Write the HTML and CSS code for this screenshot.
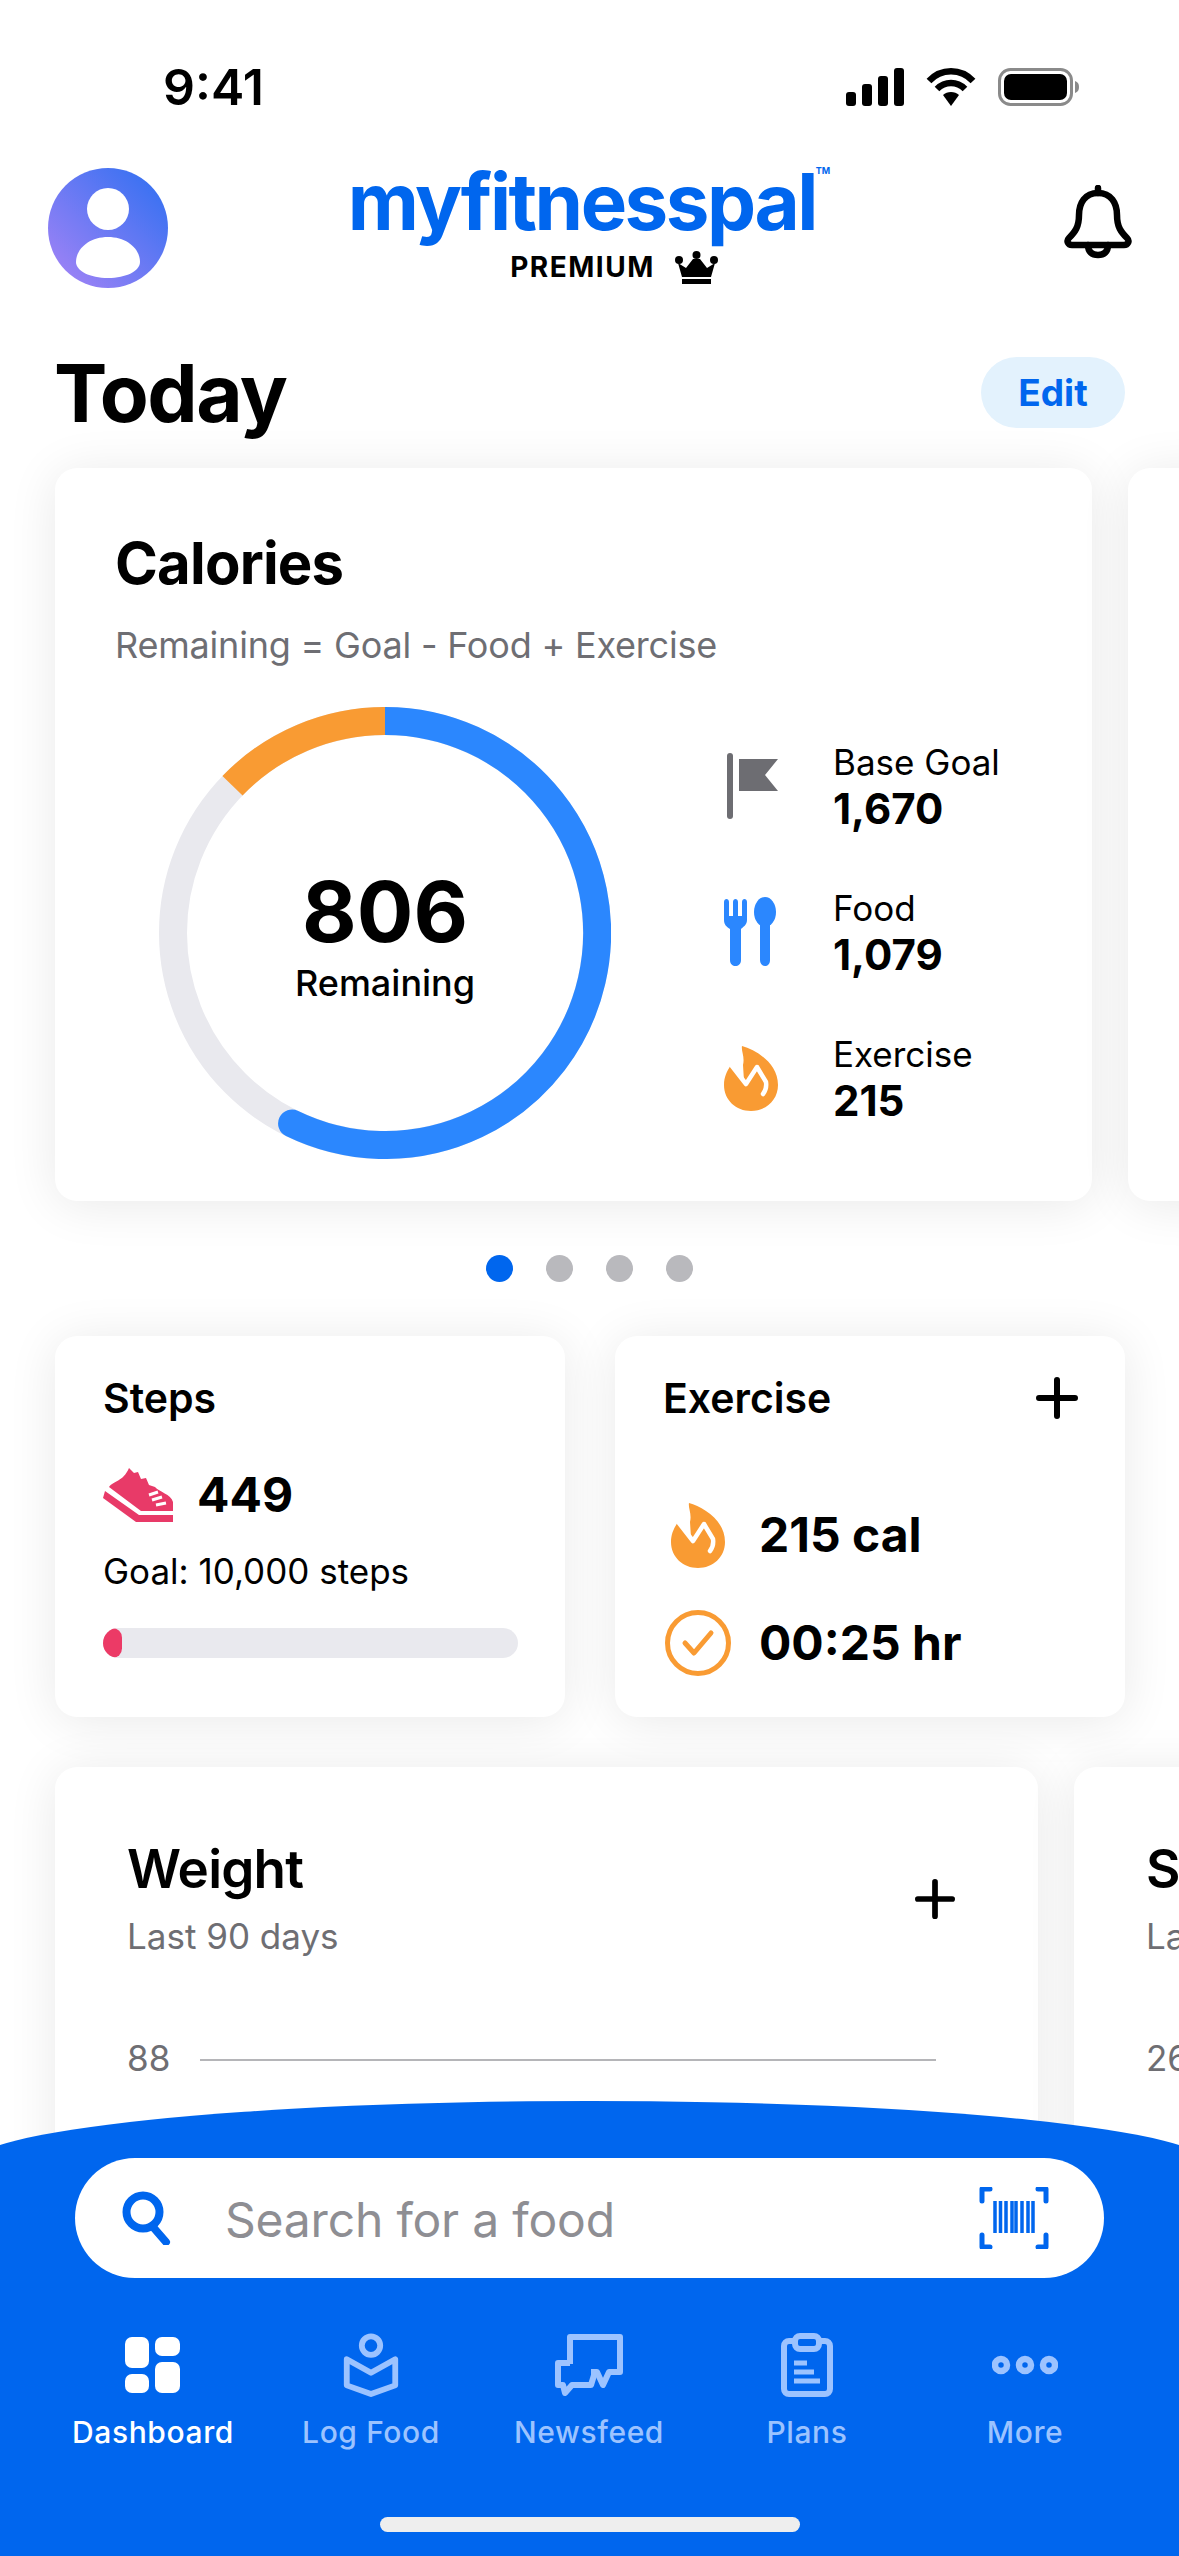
FILE: index.html
```html
<!DOCTYPE html>
<html>
  <head>
    <meta name="viewport" content="width=device-width,initial-scale=1.0" />
    <title>MyFitnessPal dashboard</title>
    <link rel="stylesheet" href="styles.css">
  </head>

  <body>
    <svg class="defs" width="0" height="0">
      <symbol id="flame" viewBox="0 0 54 66">
        <path fill="#f99b33" d="M18 1C32 5 54 18 54 40C54 55 42 66 27 66C12 66 0 55 0 40C0 32 3 26 7 20L20 36L19 20C21 12 17 6 18 1Z"/>
        <path fill="none" stroke="#fff" stroke-width="4.5" stroke-linecap="round" stroke-linejoin="round" d="M8 21L22 39L33 22L42 37Q43 44 39 49"/>
      </symbol>
      <symbol id="plus" viewBox="0 0 42 42">
        <path fill="none" stroke="#000" stroke-width="6" stroke-linecap="round" d="M21 3V39M3 21H39"/>
      </symbol>
    </svg>

    <div class="page">
      <div class="status">
        <span class="time">9:41</span>
        <div class="status-icons">
          <svg width="58" height="38" viewBox="0 0 58 38"><g fill="#000"><rect x="0" y="24" width="10" height="14" rx="3"/><rect x="16" y="16" width="10" height="22" rx="3"/><rect x="32" y="8" width="10" height="30" rx="3"/><rect x="48" y="0" width="10" height="38" rx="3"/></g></svg>
          <svg width="50" height="38" viewBox="0 0 50 38"><g fill="none" stroke="#000" stroke-width="6.500"><path d="M3 13C15 0 35 0 47 13"/><path d="M11 21C19 13 31 13 39 21"/></g><path fill="#000" d="M17 27C21 23 29 23 33 27L25 38Z"/></svg>
          <svg width="82" height="38" viewBox="0 0 82 38"><rect x="1.5" y="1.5" width="72" height="35" rx="11" fill="none" stroke="#8a8a8a" stroke-width="3"/><rect x="6" y="6" width="63" height="26" rx="7" fill="#000"/><path d="M77 13C80 14 81 16 81 19C81 22 80 24 77 25Z" fill="#8a8a8a"/></svg>
        </div>
      </div>

      <header class="topbar">
        <div class="avatar">
          <svg width="120" height="120" viewBox="0 0 120 120"><ellipse cx="60" cy="41" rx="21" ry="21" fill="#fff"/><path d="M60 69C79 69 92 81 92 94C92 103 78 110 60 110C42 110 28 103 28 94C28 81 41 69 60 69Z" fill="#fff"/></svg>
        </div>
        <div class="brand">
          <div class="logo">myfitnesspal<sup>TM</sup></div>
          <div class="premium">
            <span>PREMIUM</span>
            <svg width="43" height="33" viewBox="0 0 43 33"><g fill="#000"><circle cx="21.500" cy="4" r="4"/><circle cx="4" cy="9" r="4"/><circle cx="39" cy="9" r="4"/><path d="M3 12L11 17L18 8H25L32 17L40 12L36 26H7Z"/><rect x="7" y="28" width="29" height="5"/></g></svg>
          </div>
        </div>
        <svg class="bell" width="68" height="74" viewBox="0 0 68 74"><path fill="none" stroke="#000" stroke-width="6.500" stroke-linejoin="round" d="M34 8C21 8 15 18 15 30C15 42 11 47 5 53C2 56 4 60 8 60H60C64 60 66 56 63 53C57 47 53 42 53 30C53 18 47 8 34 8Z"/><path fill="none" stroke="#000" stroke-width="6.500" stroke-linecap="round" d="M34 3V8M24 60C24 67 28 70 34 70C40 70 44 67 44 60"/></svg>
      </header>

      <div class="today">
        <h1>Today</h1>
        <button class="edit">Edit</button>
      </div>

      <section class="carousel">
        <div class="card calories">
          <h2>Calories</h2>
          <p class="formula">Remaining = Goal - Food + Exercise</p>
          <div class="calories-body">
            <div class="ring">
              <svg width="452" height="452" viewBox="0 0 452 452">
                <circle cx="226" cy="226" r="212" fill="none" stroke="#e9e9ee" stroke-width="28"/>
                <path d="M226 14A212 212 0 1 1 133.100 416.500" fill="none" stroke="#2b87fe" stroke-width="28" stroke-linecap="round"/>
                <path d="M73.500 78.700A212 212 0 0 1 226 14" fill="none" stroke="#f99b33" stroke-width="28"/>
              </svg>
              <div class="ring-label">
                <span class="ring-number">806</span>
                <span class="ring-text">Remaining</span>
              </div>
            </div>
            <ul class="stats">
              <li>
                <svg class="stat-icon" width="54" height="66" viewBox="0 0 54 66"><rect x="3" y="0" width="6" height="66" rx="3" fill="#6d6d72"/><path d="M15 6H54L41 22L54 38H15Z" fill="#6d6d72"/></svg>
                <div><span class="stat-name">Base Goal</span><span class="stat-value">1,670</span></div>
              </li>
              <li>
                <svg class="stat-icon" width="54" height="70" viewBox="0 0 54 70"><g fill="#2b87fe"><path d="M0 5C0 1 5 1 5 5V19H9V5C9 1 14 1 14 5V19H18V5C18 1 23 1 23 5V23C23 28 19 30 17 32V63C17 71 6 71 6 63V32C3 30 0 28 0 23Z"/><ellipse cx="41" cy="15" rx="11" ry="15"/><path d="M36 26H46V63C46 71 36 71 36 63Z"/></g></svg>
                <div><span class="stat-name">Food</span><span class="stat-value">1,079</span></div>
              </li>
              <li>
                <svg class="stat-icon" width="54" height="66"><use href="#flame"/></svg>
                <div><span class="stat-name">Exercise</span><span class="stat-value">215</span></div>
              </li>
            </ul>
          </div>
        </div>
        <div class="card calories"></div>
      </section>

      <div class="dots">
        <span class="dot active"></span>
        <span class="dot"></span>
        <span class="dot"></span>
        <span class="dot"></span>
      </div>

      <section class="pair">
        <div class="card small">
          <h3>Steps</h3>
          <div class="steps-count">
            <svg width="70" height="54" viewBox="0 0 70 54"><g fill="#e83a68"><path d="M26 0L31 5L35 4L38 11L43 10L46 17L52 19C56 24 68 26 70 34V43H38L6 19C10 13 20 14 26 0Z"/><path d="M2 23L36 47H70V54H33L0 30Z"/></g><path d="M46 27L55 24M49 32L59 29M53 37L63 35" fill="none" stroke="#fff" stroke-width="3"/></svg>
            <span class="big">449</span>
          </div>
          <p class="goal">Goal: 10,000 steps</p>
          <div class="progress"><div class="progress-fill" style="width: 19px"></div></div>
        </div>
        <div class="card small">
          <div class="small-head">
            <h3>Exercise</h3>
            <svg class="plus-small" width="42" height="42"><use href="#plus"/></svg>
          </div>
          <div class="activity first">
            <span class="activity-icon"><svg width="54" height="66"><use href="#flame"/></svg></span>
            <span class="big">215 cal</span>
          </div>
          <div class="activity">
            <span class="activity-icon"><svg width="66" height="66" viewBox="0 0 66 66"><circle cx="33" cy="33" r="30.500" fill="none" stroke="#f99b33" stroke-width="5"/><path d="M20 33L29 43L46 23" fill="none" stroke="#f99b33" stroke-width="5" stroke-linecap="round" stroke-linejoin="round"/></svg></span>
            <span class="big">00:25 hr</span>
          </div>
        </div>
      </section>

      <section class="carousel trends">
        <div class="card trend">
          <div class="trend-head">
            <div>
              <h2>Weight</h2>
              <p class="muted">Last 90 days</p>
            </div>
            <svg width="40" height="42"><use href="#plus"/></svg>
          </div>
          <div class="axis"><span>88</span><i></i></div>
        </div>
        <div class="card trend">
          <h2>Steps</h2>
          <p class="muted">Last 90 days</p>
          <div class="axis"><span>26,000</span><i></i></div>
        </div>
      </section>

      <nav class="bottom">
        <div class="search">
          <svg width="50" height="54" viewBox="0 0 50 54"><circle cx="21" cy="21" r="16.500" fill="none" stroke="#0066ee" stroke-width="8"/><path d="M31 36L44 51" fill="none" stroke="#0066ee" stroke-width="8" stroke-linecap="round"/></svg>
          <span class="placeholder">Search for a food</span>
          <svg width="72" height="62" viewBox="0 0 72 62"><path d="M12 2H4V14M60 2H68V14M12 60H4V48M60 60H68V48" fill="none" stroke="#0066ee" stroke-width="5" stroke-linecap="round" stroke-linejoin="round"/><path d="M17 14V46M22.500 14V46M28 14V46M34 14V46M38 14V46M44 14V46M50 14V46M55 14V46" fill="none" stroke="#0066ee" stroke-width="3.500"/></svg>
        </div>
        <div class="tabs">
          <a class="tab active">
            <svg width="56" height="56" viewBox="0 0 56 56"><g fill="#fff"><rect x="0" y="0" width="24" height="31" rx="7"/><rect x="30" y="0" width="25" height="19" rx="7"/><rect x="0" y="37" width="24" height="19" rx="7"/><rect x="30" y="25" width="25" height="31" rx="7"/></g></svg>
            <span>Dashboard</span>
          </a>
          <a class="tab">
            <svg width="56" height="66" viewBox="0 0 56 66"><g fill="none" stroke="#9cc3ff" stroke-width="6" stroke-linejoin="round"><circle cx="28" cy="13" r="9.500"/><path d="M3 27L28 41L53 27V54L28 63L3 54Z"/></g></svg>
            <span>Log Food</span>
          </a>
          <a class="tab">
            <svg width="68" height="62" viewBox="0 0 68 62"><g fill="none" stroke="#9cc3ff" stroke-width="6" stroke-linejoin="round"><path d="M15 30V3H65V38H54L48 51L42 38H36"/><path d="M15 29H3V51H8L10 59L17 51H36L40 38"/></g></svg>
            <span>Newsfeed</span>
          </a>
          <a class="tab">
            <svg width="52" height="64" viewBox="0 0 52 64"><g fill="none" stroke="#9cc3ff" stroke-linejoin="round"><rect x="3" y="8" width="46" height="53" rx="5" stroke-width="6"/><rect x="14" y="3" width="24" height="13" rx="5" stroke-width="6" fill="#0066ee"/><path d="M13 30H26M13 39H33M13 48H39" stroke-width="5"/></g></svg>
            <span>Plans</span>
          </a>
          <a class="tab">
            <svg width="66" height="20" viewBox="0 0 66 20"><g fill="none" stroke="#9cc3ff" stroke-width="6.500"><circle cx="9" cy="10" r="6"/><circle cx="33" cy="10" r="6"/><circle cx="57" cy="10" r="6"/></g></svg>
            <span>More</span>
          </a>
        </div>
        <div class="home-bar"></div>
      </nav>
    </div>
  </body>
</html>
```

FILE: styles.css
```css
html,
body {
  margin: 0;
  padding: 0;
  background: #fff;
}

body {
  font-family: Inter, "Liberation Sans", sans-serif;
  color: #000;
}

h1,
h2,
h3,
p,
ul {
  margin: 0;
  padding: 0;
}

.defs {
  position: absolute;
}

.page {
  position: relative;
  width: 1179px;
  height: 2556px;
  overflow: hidden;
  background: #fff;
}

/* status bar */
.status {
  height: 168px;
  padding: 60px 99px 0 163px;
  box-sizing: border-box;
  display: flex;
  justify-content: space-between;
  align-items: flex-start;
}

.time {
  font-size: 50px;
  font-weight: 600;
  line-height: 54px;
  letter-spacing: 0;
}

.status-icons {
  display: flex;
  gap: 22px;
  margin-top: 8px;
}

/* header */
.topbar {
  height: 120px;
  padding: 0 47px 0 48px;
  margin-bottom: 69px;
  display: flex;
  justify-content: space-between;
  align-items: center;
}

.avatar {
  width: 120px;
  height: 120px;
  border-radius: 50%;
  background: linear-gradient(45deg, #a884f6, #2b6ff1);
}

.brand {
  display: flex;
  flex-direction: column;
  align-items: center;
  margin: 0 54px 4px 0;
}

.logo {
  font-size: 78px;
  font-weight: 700;
  line-height: 70px;
  letter-spacing: -2.5px;
  color: #0066ee;
}

.logo sup {
  font-size: 9px;
  letter-spacing: 0;
  vertical-align: 56px;
  line-height: 0;
}

.premium {
  display: flex;
  align-items: center;
  gap: 20px;
  height: 36px;
  margin-top: 12px;
  padding-left: 50px;
  font-size: 28px;
  font-weight: 700;
  letter-spacing: 1.5px;
}

.bell {
  margin-bottom: 13px;
}

.today {
  height: 71px;
  padding: 0 54px 0 54px;
  margin-bottom: 40px;
  display: flex;
  justify-content: space-between;
  align-items: center;
}

h1 {
  font-size: 80px;
  font-weight: 700;
  letter-spacing: -1.5px;
}

.edit {
  width: 144px;
  height: 71px;
  border: none;
  border-radius: 36px;
  background: #e3f2fd;
  color: #0066ee;
  font-family: inherit;
  font-size: 37px;
  font-weight: 700;
}

/* cards */
.card {
  background: #fff;
  border-radius: 22px;
  box-shadow: 0 4px 50px rgba(0, 0, 0, 0.09);
  box-sizing: border-box;
  flex-shrink: 0;
}

.carousel {
  display: flex;
  gap: 36px;
  padding-left: 55px;
}

.calories {
  width: 1037px;
  height: 733px;
  padding: 61px 0 0 60px;
}

h2 {
  font-size: 58px;
  font-weight: 700;
  line-height: 68px;
  letter-spacing: -0.8px;
}

.formula {
  margin-top: 26px;
  font-size: 36px;
  line-height: 44px;
  letter-spacing: -0.2px;
  color: #6e6e73;
}

.calories-body {
  display: flex;
  margin-top: 40px;
  margin-left: 44px;
}

.ring {
  display: grid;
  width: 452px;
  height: 452px;
  margin-right: 113px;
}

.ring > * {
  grid-area: 1 / 1;
}

.ring-label {
  display: flex;
  flex-direction: column;
  align-items: center;
  padding-top: 160px;
}

.ring-number {
  font-size: 84px;
  font-weight: 700;
  line-height: 90px;
}

.ring-text {
  margin-top: 4px;
  font-size: 36px;
  font-weight: 500;
  line-height: 44px;
}

.stats {
  list-style: none;
  display: flex;
  flex-direction: column;
  gap: 53px;
  margin-top: 32px;
}

.stats li {
  display: flex;
  align-items: center;
  height: 93px;
}

.stat-icon {
  margin-right: 55px;
}

.stat-name,
.stat-value {
  display: block;
  line-height: 46px;
  white-space: nowrap;
}

.stat-name {
  font-size: 35px;
}

.stat-value {
  margin-top: 1px;
  font-size: 42px;
  font-weight: 700;
}

.dots {
  display: flex;
  justify-content: center;
  gap: 33px;
  height: 27px;
  margin: 54px 0 54px;
  padding-left: 0;
}

.dot {
  width: 27px;
  height: 27px;
  border-radius: 50%;
  background: #b9b9bd;
}

.dot.active {
  background: #0066ee;
}

.pair {
  display: flex;
  gap: 50px;
  padding-left: 55px;
  margin-bottom: 50px;
}

.small {
  width: 510px;
  height: 381px;
  padding: 37px 48px 0;
}

h3 {
  font-size: 41px;
  font-weight: 600;
  line-height: 50px;
}

.steps-count {
  display: flex;
  align-items: center;
  gap: 24px;
  height: 54px;
  margin-top: 45px;
}

.big {
  font-size: 48px;
  font-weight: 700;
  line-height: 60px;
}

.goal {
  margin-top: 27px;
  font-size: 35px;
  line-height: 44px;
}

.progress {
  width: 415px;
  height: 30px;
  margin-top: 35px;
  border-radius: 15px;
  background: #e9e9ee;
  overflow: hidden;
}

.progress-fill {
  height: 100%;
  border-radius: 10px;
  background: #ec3a66;
}

.small-head {
  display: flex;
  justify-content: space-between;
  align-items: center;
  height: 50px;
}

.plus-small {
  margin-right: -1px;
}

.activity {
  display: flex;
  align-items: center;
  gap: 26px;
  height: 66px;
  margin-top: 42px;
}

.activity.first {
  margin-top: 79px;
}

.activity-icon {
  display: flex;
  justify-content: center;
  width: 70px;
}

.trend {
  width: 983px;
  height: 600px;
  padding: 72px 83px 0 72px;
}

.trend h2 {
  font-size: 53px;
  font-weight: 600;
  line-height: 60px;
}

.trend-head {
  display: flex;
  justify-content: space-between;
  align-items: center;
}

.muted {
  margin-top: 15px;
  font-size: 35px;
  line-height: 44px;
  color: #6e6e73;
}

.axis {
  display: flex;
  align-items: center;
  gap: 30px;
  height: 44px;
  margin-top: 78px;
  padding-right: 19px;
  font-size: 35px;
  color: #6e6e73;
}

.axis i {
  flex: 1;
  height: 2px;
  margin-top: 4px;
  background: #b5b5b8;
}

/* bottom bar, lies over the trend cards */
.bottom {
  position: absolute;
  left: 0;
  right: 0;
  top: 2101px;
  bottom: 0;
  padding-top: 57px;
  box-sizing: border-box;
}

.bottom::before {
  content: "";
  position: absolute;
  top: 0;
  bottom: 0;
  left: -31px;
  right: -31px;
  background: #0066ee;
  border-radius: 620px 620px 0 0 / 64px 64px 0 0;
}

.bottom > * {
  position: relative;
}

.search {
  display: flex;
  align-items: center;
  height: 120px;
  margin: 0 75px;
  padding: 0 54px 0 47px;
  border-radius: 60px;
  background: #fff;
}

.placeholder {
  flex: 1;
  margin-left: 53px;
  padding-top: 2px;
  font-size: 48px;
  letter-spacing: -0.2px;
  color: #8e8e93;
}

.tabs {
  display: grid;
  grid-template-columns: repeat(5, 218px);
  padding-left: 44px;
  margin-top: 55px;
}

.tab {
  display: flex;
  flex-direction: column;
  align-items: center;
  color: #9cc3ff;
  font-size: 30px;
  font-weight: 500;
  line-height: 36px;
  letter-spacing: 0.6px;
}

.tab svg {
  height: 64px;
  margin-bottom: 17px;
}

.tab.active {
  color: #fff;
}

.home-bar {
  width: 420px;
  height: 15px;
  margin: 67px auto 0;
  border-radius: 8px;
  background: #eee;
}
```
